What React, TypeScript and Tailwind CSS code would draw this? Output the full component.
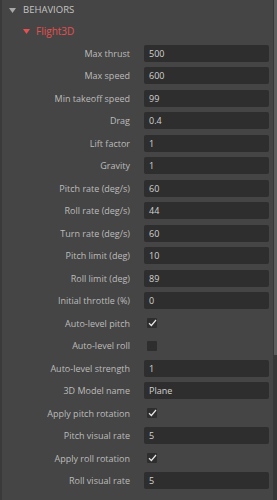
import { ReactNode } from 'react';

type Row =
    | { label: string; kind: 'text'; value: string }
    | { label: string; kind: 'check'; checked: boolean };

const rows: Row[] = [
    { label: 'Max thrust', kind: 'text', value: '500' },
    { label: 'Max speed', kind: 'text', value: '600' },
    { label: 'Min takeoff speed', kind: 'text', value: '99' },
    { label: 'Drag', kind: 'text', value: '0.4' },
    { label: 'Lift factor', kind: 'text', value: '1' },
    { label: 'Gravity', kind: 'text', value: '1' },
    { label: 'Pitch rate (deg/s)', kind: 'text', value: '60' },
    { label: 'Roll rate (deg/s)', kind: 'text', value: '44' },
    { label: 'Turn rate (deg/s)', kind: 'text', value: '60' },
    { label: 'Pitch limit (deg)', kind: 'text', value: '10' },
    { label: 'Roll limit (deg)', kind: 'text', value: '89' },
    { label: 'Initial throttle (%)', kind: 'text', value: '0' },
    { label: 'Auto-level pitch', kind: 'check', checked: true },
    { label: 'Auto-level roll', kind: 'check', checked: false },
    { label: 'Auto-level strength', kind: 'text', value: '1' },
    { label: '3D Model name', kind: 'text', value: 'Plane' },
    { label: 'Apply pitch rotation', kind: 'check', checked: true },
    { label: 'Pitch visual rate', kind: 'text', value: '5' },
    { label: 'Apply roll rotation', kind: 'check', checked: true },
    { label: 'Roll visual rate', kind: 'text', value: '5' },
];

const Caret = ({ className }: { className: string }) => (
    <svg width="7" height="5" viewBox="0 0 7 5" className={className}>
        <path d="M0 0 H7 L3.5 5 Z" fill="currentColor" />
    </svg>
);

const Check = ({ checked }: { checked: boolean }) => (
    <div className="w-[10px] h-[10px] ml-[3px] bg-[#2e2e2e] rounded-[1px] flex items-center justify-center">
        {checked && (
            <svg width="9" height="8" viewBox="0 0 9 8">
                <path d="M1 4.2 L3.4 6.5 L8 1" stroke="#e6e6e6" strokeWidth="1.2" fill="none" />
            </svg>
        )}
    </div>
);

const Field = ({ row }: { row: Row }): ReactNode => (
    <div className="h-[22.5px] flex items-center">
        <div className="w-[128px] shrink-0 text-right text-[#bcbcbc] whitespace-nowrap">{row.label}</div>
        <div className="ml-[14px] flex-1">
            {row.kind === 'text' ? (
                <div className="h-[17px] w-[125px] bg-[#2e2e2e] rounded-[2px] pl-[5px] flex items-center text-[#d2d2d2]">
                    {row.value}
                </div>
            ) : (
                <Check checked={row.checked} />
            )}
        </div>
    </div>
);

export default function App() {
    return (
        <div
            className="w-[277px] h-[500px] overflow-hidden bg-[#454545] flex text-[9px]"
            style={{ fontFamily: '"Open Sans", "Noto Sans", sans-serif' }}
        >
            <div className="w-[2px] bg-[#3a3a3a] shrink-0" />
            <div className="flex-1">
                {/* cabecera */}
                <div className="h-[20px] flex items-center pl-[7px] text-[#c4c4c4] text-[9.5px]">
                    <Caret className="text-[#a8a8a8] mr-[7px]" />
                    <span>BEHAVIORS</span>
                </div>
                <div className="h-[22px] flex items-center pl-[21px] text-[#e65050] text-[10px]">
                    <Caret className="mr-[6px]" />
                    <span>Flight3D</span>
                </div>
                {rows.map((row) => (
                    <Field key={row.label} row={row} />
                ))}
            </div>
            {/* barra de scroll */}
            <div className="w-[4px] shrink-0 bg-[#383838] flex flex-col">
                <div className="h-[355px] w-[3px] ml-[1px] bg-[#5e5e5e]" />
            </div>
        </div>
    );
}
